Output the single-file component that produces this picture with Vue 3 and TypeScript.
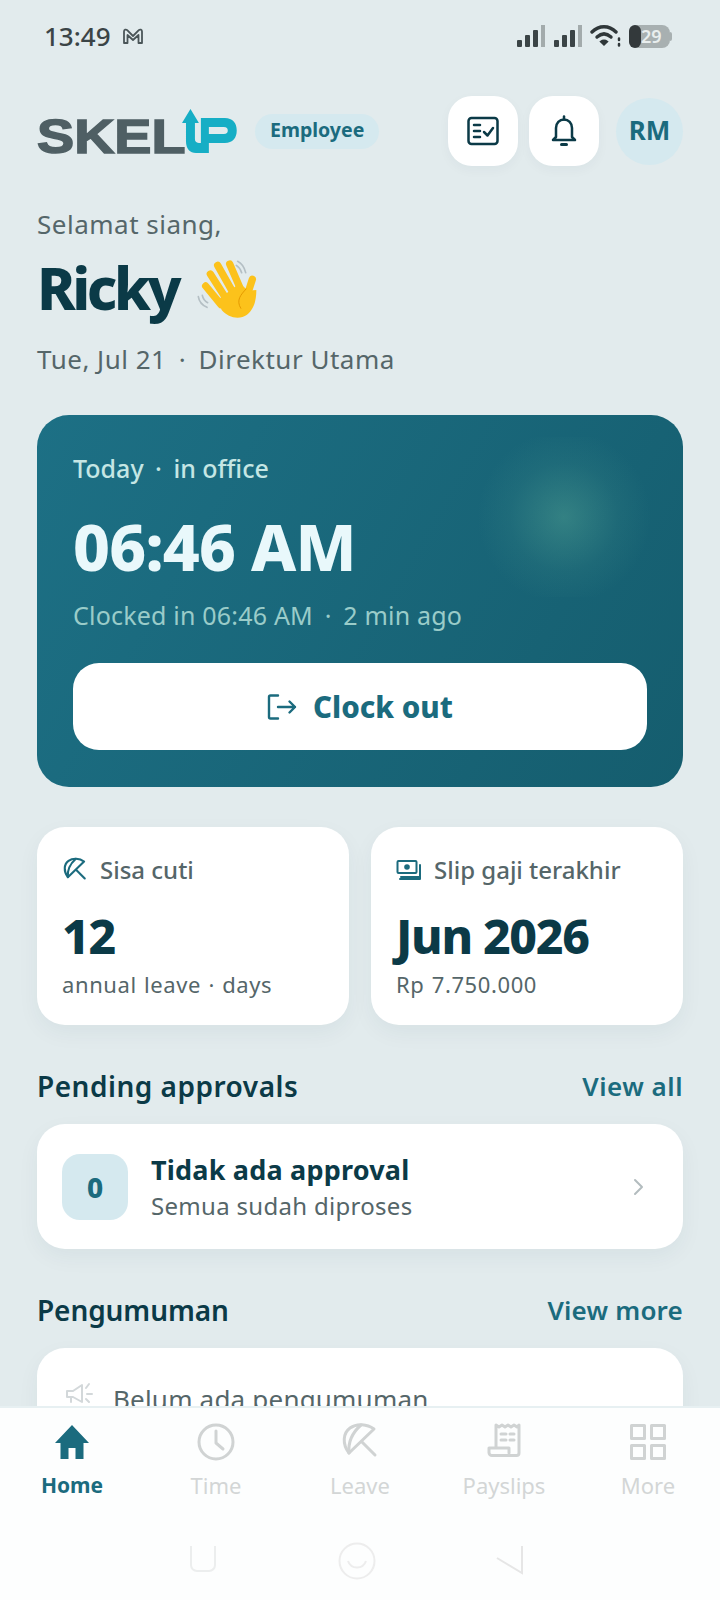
<template>
  <div class="screen">
    <div class="status">
      <div class="status-left">
        <span class="clock">13:49</span>
        <svg class="gmail" width="24" height="18" viewBox="0 0 24 18" fill="none" stroke="#4a5558" stroke-width="1.8" stroke-linejoin="round">
          <path d="M3 16V4.500C3 2.500 5 2 6.200 3.200L12 9l5.800-5.800C19 2 21 2.500 21 4.500V16h-3.500V8L12 13 6.500 8v8z" />
        </svg>
      </div>
      <div class="status-right">
        <svg width="30" height="24" viewBox="0 0 30 24">
          <rect x="1" y="16" width="5" height="7" rx="1" fill="#3b4446" />
          <rect x="9" y="11" width="5" height="12" rx="1" fill="#3b4446" />
          <rect x="17" y="6" width="5" height="17" rx="1" fill="#3b4446" />
          <rect x="25" y="1" width="4" height="22" fill="#a3abac" />
        </svg>
        <svg class="sim2" width="30" height="24" viewBox="0 0 30 24">
          <rect x="1" y="16" width="5" height="7" rx="1" fill="#3b4446" />
          <rect x="9" y="11" width="5" height="12" rx="1" fill="#3b4446" />
          <rect x="17" y="6" width="5" height="17" rx="1" fill="#3b4446" />
          <rect x="25" y="1" width="4" height="22" fill="#a3abac" />
        </svg>
        <svg class="wifi" width="32" height="24" viewBox="0 0 32 24" fill="none" stroke="#2f3739" stroke-width="3.400" stroke-linecap="round">
          <path d="M2 8c7-7 17-7 24 0" />
          <path d="M7 13c4.500-4 9.500-4 14 0" />
          <path d="M14 21l-3.500-3.500c2-1.500 5-1.500 7 0z" fill="#2f3739" stroke-width="1.500" />
          <path d="M29 14.500v1.500M29 20v1.500" stroke-width="2.500" />
        </svg>
        <div class="battery">
          <span class="battery-fill"></span>
          <span class="battery-num">29</span>
        </div>
        <span class="battery-nub"></span>
      </div>
    </div>

    <main class="content">
      <header class="topbar">
        <div class="logo">
          <span class="logo-word">SKEL</span>
          <svg class="logo-mark" width="56" height="48" viewBox="0 0 56 48">
            <path
              fill="#16aec5"
              fill-rule="evenodd"
              d="M8.500 2L17 16H13V32C13 35 15 36 18 36H19V11H43C51 11 55 16 55 23.500C55 31 51 36 43 36H27V46H14C8 46 4 42 4 34V16H0ZM27 20H42C45 20 46 21.500 46 23.500C46 25.500 45 27 42 27H27Z"
            />
          </svg>
        </div>
        <span class="role">Employee</span>
        <div class="top-actions">
          <button class="square-btn">
            <svg width="34" height="30" viewBox="0 0 34 30" fill="none" stroke="#0b3a47" stroke-width="2.500" stroke-linecap="round" stroke-linejoin="round">
              <rect x="2.500" y="2" width="29" height="26" rx="3" />
              <path d="M8 9h6M8 15h6M8 21h6" />
              <path d="M18 16l3.500 3.500L27 12" />
            </svg>
          </button>
          <button class="square-btn">
            <svg width="28" height="32" viewBox="0 0 28 32" fill="none" stroke="#0b3a47" stroke-width="2.500" stroke-linecap="round" stroke-linejoin="round">
              <path d="M14 1.500v3" />
              <path d="M6 22V13c0-5 3.500-8.500 8-8.500s8 3.500 8 8.500v9l3 3H3z" />
              <path d="M11.500 29.500h5" stroke-width="3" />
            </svg>
          </button>
          <div class="avatar">RM</div>
        </div>
      </header>

      <section class="greeting">
        <div class="hello">Selamat siang,</div>
        <div class="name-row">
          <h1 class="name">Ricky</h1>
          <svg class="wave" width="80" height="80" viewBox="0 0 240 240">
            <g fill="none" stroke="#b4bfc4" stroke-width="5" stroke-linecap="round">
              <path d="M140 34c12 6 20 18 24 34" />
              <path d="M136 46c8 5 13 12 16 22" />
              <path d="M22 140c2 14 12 26 26 32" />
              <path d="M34 136c2 10 8 18 16 22" />
            </g>
            <g stroke="#fcc21b" stroke-width="22" stroke-linecap="round">
              <path d="M44 108L90 164" />
              <path d="M58 72L104 144" />
              <path d="M80 46L124 124" />
              <path d="M116 42L148 116" />
              <path d="M184 88L166 144" />
            </g>
            <path d="M80 150L146 100L172 122L196 120C196 150 190 176 168 194C146 210 112 204 92 180z" fill="#fcc21b" />
            <path d="M166 116C150 134 134 150 150 176" fill="none" stroke="#e59a00" stroke-width="3" />
          </svg>
        </div>
        <div class="meta">Tue, Jul 21 <span class="dot">·</span> Direktur Utama</div>
      </section>

      <section class="hero">
        <span class="glow"></span>
        <div class="hero-top">Today <span class="dot">·</span> in office</div>
        <div class="hero-time">06:46 AM</div>
        <div class="hero-sub">Clocked in 06:46 AM <span class="dot">·</span> 2 min ago</div>
        <button class="clock-btn">
          <svg width="30" height="28" viewBox="0 0 30 28" fill="none" stroke="#1b6b7e" stroke-width="2.400" stroke-linecap="round" stroke-linejoin="round">
            <path d="M11 2.500H3.500A1.500 1.500 0 0 0 2 4v20a1.500 1.500 0 0 0 1.500 1.500H11" />
            <path d="M11 14h17M22.500 8.500L28 14l-5.500 5.500" />
          </svg>
          Clock out
        </button>
      </section>

      <section class="stats">
        <div v-for="card in stats" :key="card.label" class="stat card">
          <div class="stat-label">
            <svg v-if="card.icon === 'leave'" width="26" height="26" viewBox="0 0 40 40" fill="none" stroke="#1b6b7e" stroke-width="3.200" stroke-linecap="round" stroke-linejoin="round">
              <path d="M34 7C27 2 17 1 10 6C3 11 2 22 9 31Z" />
              <path d="M9 31C8 20 13 10 21 3" />
              <path d="M22 20L35 33" />
            </svg>
            <svg v-else width="26" height="24" viewBox="0 0 26 24" fill="none" stroke="#1b6b7e" stroke-width="2" stroke-linecap="round" stroke-linejoin="round">
              <rect x="1.500" y="3" width="19" height="12" rx="1" />
              <circle cx="11" cy="9" r="2.800" fill="#1b6b7e" stroke="none" />
              <path d="M24 7v12H5M24 19v2H4" />
            </svg>
            {{ card.label }}
          </div>
          <div class="stat-value">{{ card.value }}</div>
          <div class="stat-sub">{{ card.sub }}</div>
        </div>
      </section>

      <div class="section-head head-first">
        <h2>Pending approvals</h2>
        <a>View all</a>
      </div>
      <div class="approval card">
        <div class="count">0</div>
        <div class="approval-text">
          <div class="approval-title">Tidak ada approval</div>
          <div class="approval-sub">Semua sudah diproses</div>
        </div>
        <svg class="chevron" width="14" height="20" viewBox="0 0 14 20" fill="none" stroke="#b3bcbf" stroke-width="2" stroke-linecap="round" stroke-linejoin="round">
          <path d="M3 3l7 7-7 7" />
        </svg>
      </div>

      <div class="section-head head-second">
        <h2>Pengumuman</h2>
        <a>View more</a>
      </div>
      <div class="notice card">
        <svg width="30" height="26" viewBox="0 0 30 26" fill="none" stroke="#d3d8da" stroke-width="2" stroke-linecap="round" stroke-linejoin="round">
          <path d="M2 10h6l9-6v17l-9-5H2zM6 16v5" />
          <path d="M21 7l3-4M22 13h5M21 18l3 3" />
        </svg>
        <span>Belum ada pengumuman</span>
      </div>
    </main>

    <nav class="tabbar">
      <div v-for="tab in tabs" :key="tab.label" class="tab" :class="{ active: tab.active }">
        <svg width="40" height="40" viewBox="0 0 40 40" fill="none" stroke="#d0d3d3" stroke-width="3" stroke-linecap="round" stroke-linejoin="round">
          <template v-if="tab.icon === 'home'">
            <path d="M20 3L37 21H31.500V37H23.500V26H16.500V37H8.500V21H3z" fill="#1b6b7e" stroke="none" />
          </template>
          <template v-else-if="tab.icon === 'time'">
            <circle cx="20" cy="20" r="17" />
            <path d="M20 9v12l7 6" />
          </template>
          <template v-else-if="tab.icon === 'leave'">
            <path d="M34 7C27 2 17 1 10 6C3 11 2 22 9 31Z" />
            <path d="M9 31C8 20 13 10 21 3" />
            <path d="M22 20L35 33" />
          </template>
          <template v-else-if="tab.icon === 'pay'">
            <path d="M12 26V3l3 2 3-2 3 2 3-2 3 2 3-2 3 2 2-2v28a2.500 2.500 0 0 1-2.500 2.500H8a3 3 0 0 1-3-3V26h20v5" />
            <path d="M17 12h5M26 12h4M17 18h5M26 18h4" />
          </template>
          <template v-else>
            <rect x="3.500" y="3.500" width="13" height="13" />
            <rect x="23.500" y="3.500" width="13" height="13" />
            <rect x="3.500" y="23.500" width="13" height="13" />
            <rect x="23.500" y="23.500" width="13" height="13" />
          </template>
        </svg>
        <span>{{ tab.label }}</span>
      </div>
    </nav>

    <div class="sysnav">
      <span class="sys-square"></span>
      <svg class="sys-home" width="38" height="38" viewBox="0 0 38 38" fill="none" stroke="#ededed" stroke-width="2">
        <circle cx="19" cy="19" r="17.500" />
        <path d="M10 19a9.500 9.500 0 0 0 18 0" />
      </svg>
      <svg class="sys-back" width="28" height="30" viewBox="0 0 28 30" fill="none" stroke="#e6e6e6" stroke-width="2">
        <path d="M27 1v27L2 13" />
      </svg>
    </div>
  </div>
</template>

<script setup lang="ts">
const stats = [
  { icon: "leave", label: "Sisa cuti", value: "12", sub: "annual leave · days" },
  { icon: "slip", label: "Slip gaji terakhir", value: "Jun 2026", sub: "Rp 7.750.000" },
];

const tabs = [
  { icon: "home", label: "Home", active: true },
  { icon: "time", label: "Time", active: false },
  { icon: "leave", label: "Leave", active: false },
  { icon: "pay", label: "Payslips", active: false },
  { icon: "more", label: "More", active: false },
];
</script>

<style>
html,
body {
  margin: 0;
  background: #e2ebed;
}
</style>

<style scoped>
.screen {
  width: 720px;
  height: 1600px;
  display: flex;
  flex-direction: column;
  overflow: hidden;
  background: #e2ebed;
  font-family: "Noto Sans", "Open Sans", sans-serif;
  color: #0b3a47;
}

.status {
  flex: none;
  height: 72px;
  padding: 0 44px;
  display: flex;
  justify-content: space-between;
  align-items: center;
}

.status-left,
.status-right {
  display: flex;
  align-items: center;
}

.clock {
  font-size: 26px;
  font-weight: 500;
  color: #3b4446;
  margin-right: 10px;
}

.status-right {
  margin-right: 4px;
}

.sim2 {
  margin-left: 7px;
}

.wifi {
  margin-left: 7px;
}

.battery {
  position: relative;
  margin-left: 7px;
  width: 41px;
  height: 23px;
  border-radius: 8px;
  background: #a8b0b1;
}

.battery-fill {
  position: absolute;
  left: 0;
  top: 0;
  width: 12px;
  height: 23px;
  border-radius: 8px;
  background: #33393b;
}

.battery-num {
  position: absolute;
  left: 12px;
  top: 0;
  font-size: 18px;
  line-height: 23px;
  font-weight: 600;
  color: #e9eeee;
}

.battery-nub {
  width: 2px;
  height: 9px;
  border-radius: 0 2px 2px 0;
  background: #a8b0b1;
}

.content {
  flex: 1;
  min-height: 0;
  overflow: hidden;
  padding: 24px 37px 0;
}

.topbar {
  display: flex;
  align-items: center;
  height: 70px;
}

.logo {
  display: flex;
  align-items: flex-end;
  width: 201px;
  height: 48px;
}

.logo-word {
  font-family: "Liberation Sans", sans-serif;
  font-size: 48px;
  line-height: 37px;
  font-weight: 700;
  color: #4f5f64;
  -webkit-text-stroke: 1.5px #4f5f64;
  width: 146px;
  display: inline-block;
  transform: scaleX(1.16);
  transform-origin: left bottom;
}

.role {
  margin-left: 17px;
  padding: 0 15px;
  height: 35px;
  line-height: 32px;
  box-sizing: border-box;
  border-radius: 18px;
  background: #d5e9ef;
  color: #1b6b7e;
  font-size: 19.5px;
  font-weight: 700;
}

.top-actions {
  margin-left: auto;
  display: flex;
  align-items: center;
  gap: 11px;
}

.square-btn {
  width: 70px;
  height: 70px;
  padding: 0;
  border: none;
  border-radius: 24px;
  background: #fff;
  display: flex;
  align-items: center;
  justify-content: center;
  box-shadow: 0 4px 12px rgba(11, 58, 71, 0.04);
}

.avatar {
  margin-left: 6px;
  width: 67px;
  height: 67px;
  box-sizing: border-box;
  padding-bottom: 2px;
  border-radius: 50%;
  background: #d5e9ef;
  color: #1b6b7e;
  font-size: 26px;
  font-weight: 700;
  display: flex;
  align-items: center;
  justify-content: center;
}

.greeting {
  margin-top: 40px;
}

.hello {
  font-size: 26px;
  line-height: 36px;
  letter-spacing: 0.5px;
  color: #556669;
}

.name-row {
  display: flex;
  align-items: center;
  gap: 13px;
  height: 72px;
  margin-top: 10px;
}

.name {
  margin: 0;
  font-size: 58px;
  line-height: 72px;
  font-weight: 800;
  letter-spacing: -3.4px;
}

.wave {
  margin-top: 4px;
}

.meta {
  margin-top: 17px;
  font-size: 26px;
  line-height: 36px;
  letter-spacing: 0.5px;
  color: #556669;
}

.dot {
  margin: 0 5px;
}

.hero {
  position: relative;
  margin-top: 38px;
  height: 372px;
  box-sizing: border-box;
  padding: 36px;
  border-radius: 32px;
  overflow: hidden;
  background: linear-gradient(120deg, #1d7085 0%, #155d6e 100%);
  color: #e9f8fb;
}

.glow {
  position: absolute;
  left: 437px;
  top: 22px;
  width: 180px;
  height: 160px;
  background: radial-gradient(circle, rgba(90, 170, 150, 0.42) 0%, rgba(90, 170, 150, 0.1) 45%, rgba(90, 170, 150, 0) 72%);
}

.hero-top {
  position: relative;
  font-size: 25px;
  line-height: 34px;
  font-weight: 500;
  color: #c5e6e4;
}

.hero-time {
  position: relative;
  margin-top: 20px;
  font-size: 64px;
  line-height: 84px;
  font-weight: 800;
  letter-spacing: -0.8px;
}

.hero-sub {
  position: relative;
  margin-top: 8px;
  font-size: 25px;
  line-height: 36px;
  letter-spacing: 0.2px;
  color: #9accc9;
}

.clock-btn {
  position: relative;
  margin-top: 30px;
  width: 100%;
  height: 87px;
  border: none;
  border-radius: 26px;
  background: #fff;
  color: #1b6b7e;
  font-family: inherit;
  font-size: 29.5px;
  font-weight: 800;
  display: flex;
  align-items: center;
  justify-content: center;
  gap: 16px;
}

.card {
  background: #fff;
  box-shadow: 0 8px 22px rgba(11, 58, 71, 0.05);
}

.stats {
  margin-top: 40px;
  display: grid;
  grid-template-columns: 1fr 1fr;
  gap: 22px;
}

.stat {
  height: 198px;
  box-sizing: border-box;
  padding: 26px 25px;
  border-radius: 28px;
}

.stat-label {
  display: flex;
  align-items: center;
  gap: 12px;
  font-size: 24px;
  line-height: 34px;
  font-weight: 500;
  color: #556669;
}

.stat-value {
  margin-top: 19px;
  font-size: 48px;
  line-height: 60px;
  font-weight: 800;
  letter-spacing: -1.3px;
}

.stat-sub {
  margin-top: 2px;
  font-size: 22px;
  line-height: 32px;
  letter-spacing: 0.6px;
  word-spacing: 1px;
  color: #556669;
}

.section-head {
  display: flex;
  justify-content: space-between;
  align-items: center;
  height: 40px;
}

.section-head h2 {
  margin: 0;
  font-size: 28px;
  font-weight: 600;
}

.section-head a {
  font-size: 26px;
  font-weight: 600;
  letter-spacing: 0.2px;
  color: #1b6b7e;
}

.head-first {
  margin-top: 41px;
}

.head-first h2 {
  letter-spacing: 0.5px;
}

.head-first a {
  letter-spacing: 0.5px;
}

.head-second {
  margin-top: 41px;
}

.head-second h2 {
  letter-spacing: -0.1px;
}

.approval {
  margin-top: 18px;
  height: 125px;
  box-sizing: border-box;
  padding: 0 37px 0 25px;
  border-radius: 28px;
  display: flex;
  align-items: center;
}

.count {
  width: 66px;
  height: 66px;
  border-radius: 18px;
  background: #d5e9ef;
  color: #1b6b7e;
  font-size: 28px;
  font-weight: 800;
  display: flex;
  align-items: center;
  justify-content: center;
}

.approval-text {
  margin-left: 23px;
}

.approval-title {
  font-size: 27px;
  line-height: 38px;
  font-weight: 700;
  letter-spacing: 0.2px;
}

.approval-sub {
  font-size: 24px;
  line-height: 34px;
  letter-spacing: 0.3px;
  color: #556669;
}

.chevron {
  margin-left: auto;
}

.notice {
  margin-top: 18px;
  height: 140px;
  box-sizing: border-box;
  padding: 33px 28px 0;
  border-radius: 28px;
  display: flex;
  align-items: flex-start;
  gap: 18px;
  font-size: 26px;
  line-height: 36px;
  letter-spacing: 0.2px;
  color: #556669;
}

.tabbar {
  flex: none;
  height: 106px;
  display: grid;
  grid-template-columns: repeat(5, 144px);
  background: #fdfefe;
  border-top: 2px solid #e7f0f2;
}

.tab {
  display: flex;
  flex-direction: column;
  align-items: center;
  padding-top: 14px;
  font-size: 22px;
  line-height: 30px;
  color: #d3d6d6;
}

.tab span {
  margin-top: 8px;
}

.tab.active {
  color: #1b6b7e;
  font-size: 21px;
  font-weight: 700;
}

.sysnav {
  flex: none;
  height: 86px;
  background: #fdfefe;
  display: flex;
  align-items: flex-start;
  padding-left: 190px;
}

.sys-square {
  width: 26px;
  height: 26px;
  margin-top: 32px;
  box-sizing: border-box;
  border: 2px solid #eceeee;
  border-top: none;
  border-radius: 0 0 7px 7px;
}

.sys-home {
  margin-top: 28px;
  margin-left: 122px;
}

.sys-back {
  margin-top: 31px;
  margin-left: 119px;
}
</style>
